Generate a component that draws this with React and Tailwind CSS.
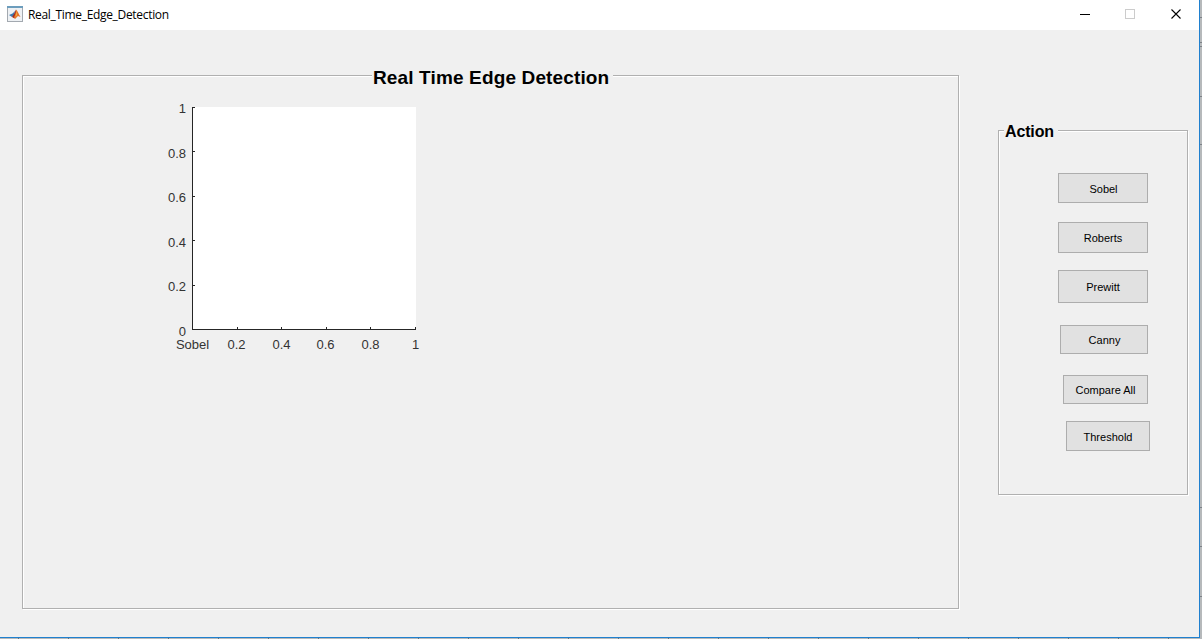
const actions = [
  { label: 'Sobel', box: 'mt-[42px] ml-[59px] w-[90px] h-[30px] pl-[1px]' },
  { label: 'Roberts', box: 'mt-[19px] ml-[59px] w-[90px] h-[31px]' },
  { label: 'Prewitt', box: 'mt-[17px] ml-[59px] w-[90px] h-[33px]' },
  { label: 'Canny', box: 'mt-[22px] ml-[61px] w-[88px] h-[29px] pl-[1px]' },
  { label: 'Compare All', box: 'mt-[21px] ml-[64px] w-[85px] h-[29px]' },
  { label: 'Threshold', box: 'mt-[17px] ml-[67px] w-[84px] h-[30px]' },
];

const xTicks = [['Sobel', 42, 42.5], ['0.2', 87, 86.5], ['0.4', 131, 131.5], ['0.6', 176, 175.5], ['0.8', 220, 220.5], ['1', 265, 265.5]];
const yTicks = [['1', 17, 23], ['0.8', 61, 68], ['0.6', 106, 112], ['0.4', 150, 157], ['0.2', 195, 201], ['0', 239, 246]];
const bottomMarks = Array.from({ length: 24 }, (_, i) => 18 + i * 50);
const sideMarks = [17, 42, 46, 96, 144, 507, 546, 596];

function MatlabIcon() {
  return (
    <svg width="16" height="16" viewBox="0 0 16 16" className="-mt-[2px] shrink-0">
      <rect x="0.5" y="0.5" width="15" height="15" fill="#eef1f4" stroke="#a3a9b0" />
      <rect x="0" y="0" width="16" height="2" fill="#6c9dbd" />
      <path d="M2 9 L5.5 7.5 L8 5 L7 9.5 L5 11Z" fill="#3b79b0" />
      <path d="M5 11 L7 8 L9 3.5 L9.5 9 L7.5 12.5Z" fill="#a52d1d" />
      <path d="M9 3.5 C10.5 4.5 12 8.5 13.5 11 L11 10 L8 13 L7 11 C8.5 9 9 6 9 3.5Z" fill="#e5732a" />
      <path d="M9.2 5 L10 9 L8.5 11Z" fill="#f6b23d" />
    </svg>
  );
}

function Axes() {
  return (
    <svg width="280" height="270" className="ml-[127px] -mt-[3px] block" fontFamily="Liberation Sans, Arial, sans-serif" fontSize="13" fill="#333333">
      <rect x="42" y="17" width="224" height="223" fill="#ffffff" />
      <g fill="#262626" shapeRendering="crispEdges">
        <rect x="42" y="17" width="1" height="223" />
        <rect x="42" y="239" width="224" height="1" />
        {xTicks.map(([t, x]) => <rect key={t} x={x} y="237" width="1" height="2" />)}
        {yTicks.map(([t, y]) => <rect key={t} x="43" y={y} width="2" height="1" />)}
      </g>
      {xTicks.map(([t, , x]) => <text key={t} x={x} y="259" textAnchor="middle">{t}</text>)}
      {yTicks.map(([t, , y]) => <text key={t} x="36" y={y} textAnchor="end">{t}</text>)}
    </svg>
  );
}

export default function App() {
  return (
    <div className="flex h-[639px] w-[1202px] flex-col overflow-hidden bg-[#b6b9bb] font-['Liberation_Sans',Arial,sans-serif] text-black">
      <div className="flex h-[638px]">
        <div className="flex h-[638px] w-[1200px] flex-col border-r border-b border-[#1f80cf] bg-[#f0f0f0]">
          <header className="flex h-[30px] shrink-0 items-center bg-white pl-[7px]">
            <MatlabIcon />
            <span className="ml-[5px] text-[12px] leading-[16px] tracking-[-0.32px] font-['Open_Sans','Noto_Sans',sans-serif]">Real_Time_Edge_Detection</span>
            <svg width="104" height="12" className="-mt-[2px] mr-[17px] ml-auto" fill="none" shapeRendering="crispEdges">
              <rect x="2" y="6" width="10" height="1" fill="#000" />
              <rect x="47.5" y="1.5" width="9" height="9" stroke="#cccccc" />
              <path d="M93.5 1.5 L102.5 10.5 M102.5 1.5 L93.5 10.5" stroke="#000" strokeWidth="1.1" shapeRendering="auto" />
            </svg>
          </header>
          <main className="flex items-start pl-[22px] pt-[45px]">
            <section className="h-[534px] w-[937px] border border-[#b0b0b0] shadow-[1px_1px_0_#fff,inset_1px_1px_0_#fff]">
              <h1 className="-mt-[13px] mb-px ml-[349px] h-[29px] w-[241px] bg-[#f0f0f0] pl-[1px] text-[19px] leading-[29px] font-bold tracking-[0.14px] whitespace-nowrap">Real Time Edge Detection</h1>
              <Axes />
            </section>
            <section className="mt-[55px] ml-[39px] h-[365px] w-[190px] border border-[#b0b0b0] shadow-[1px_1px_0_#fff,inset_1px_1px_0_#fff]">
              <h2 className="-mt-[10px] ml-[5px] h-[20px] w-[54px] bg-[#f0f0f0] pl-[1px] text-[16px] leading-[21px] font-bold tracking-[-0.15px]">Action</h2>
              <div className="flex flex-col items-start -mt-[10px]">
                {actions.map(({ label, box }) => (
                  <button key={label} className={`${box} flex items-center justify-center border border-[#adadad] bg-[#e1e1e1] pt-[2px] text-[11px] leading-[13px] whitespace-nowrap`}>{label}</button>
                ))}
              </div>
            </section>
          </main>
        </div>
        <svg width="2" height="638">
          {sideMarks.map((y) => <rect key={y} x="0" y={y} width="2" height="1" fill="#7d8287" />)}
        </svg>
      </div>
      <svg width="1202" height="1" className="block">
        {bottomMarks.map((x) => <rect key={x} x={x} y="0" width="1" height="1" fill="#6b747b" />)}
      </svg>
    </div>
  );
}
